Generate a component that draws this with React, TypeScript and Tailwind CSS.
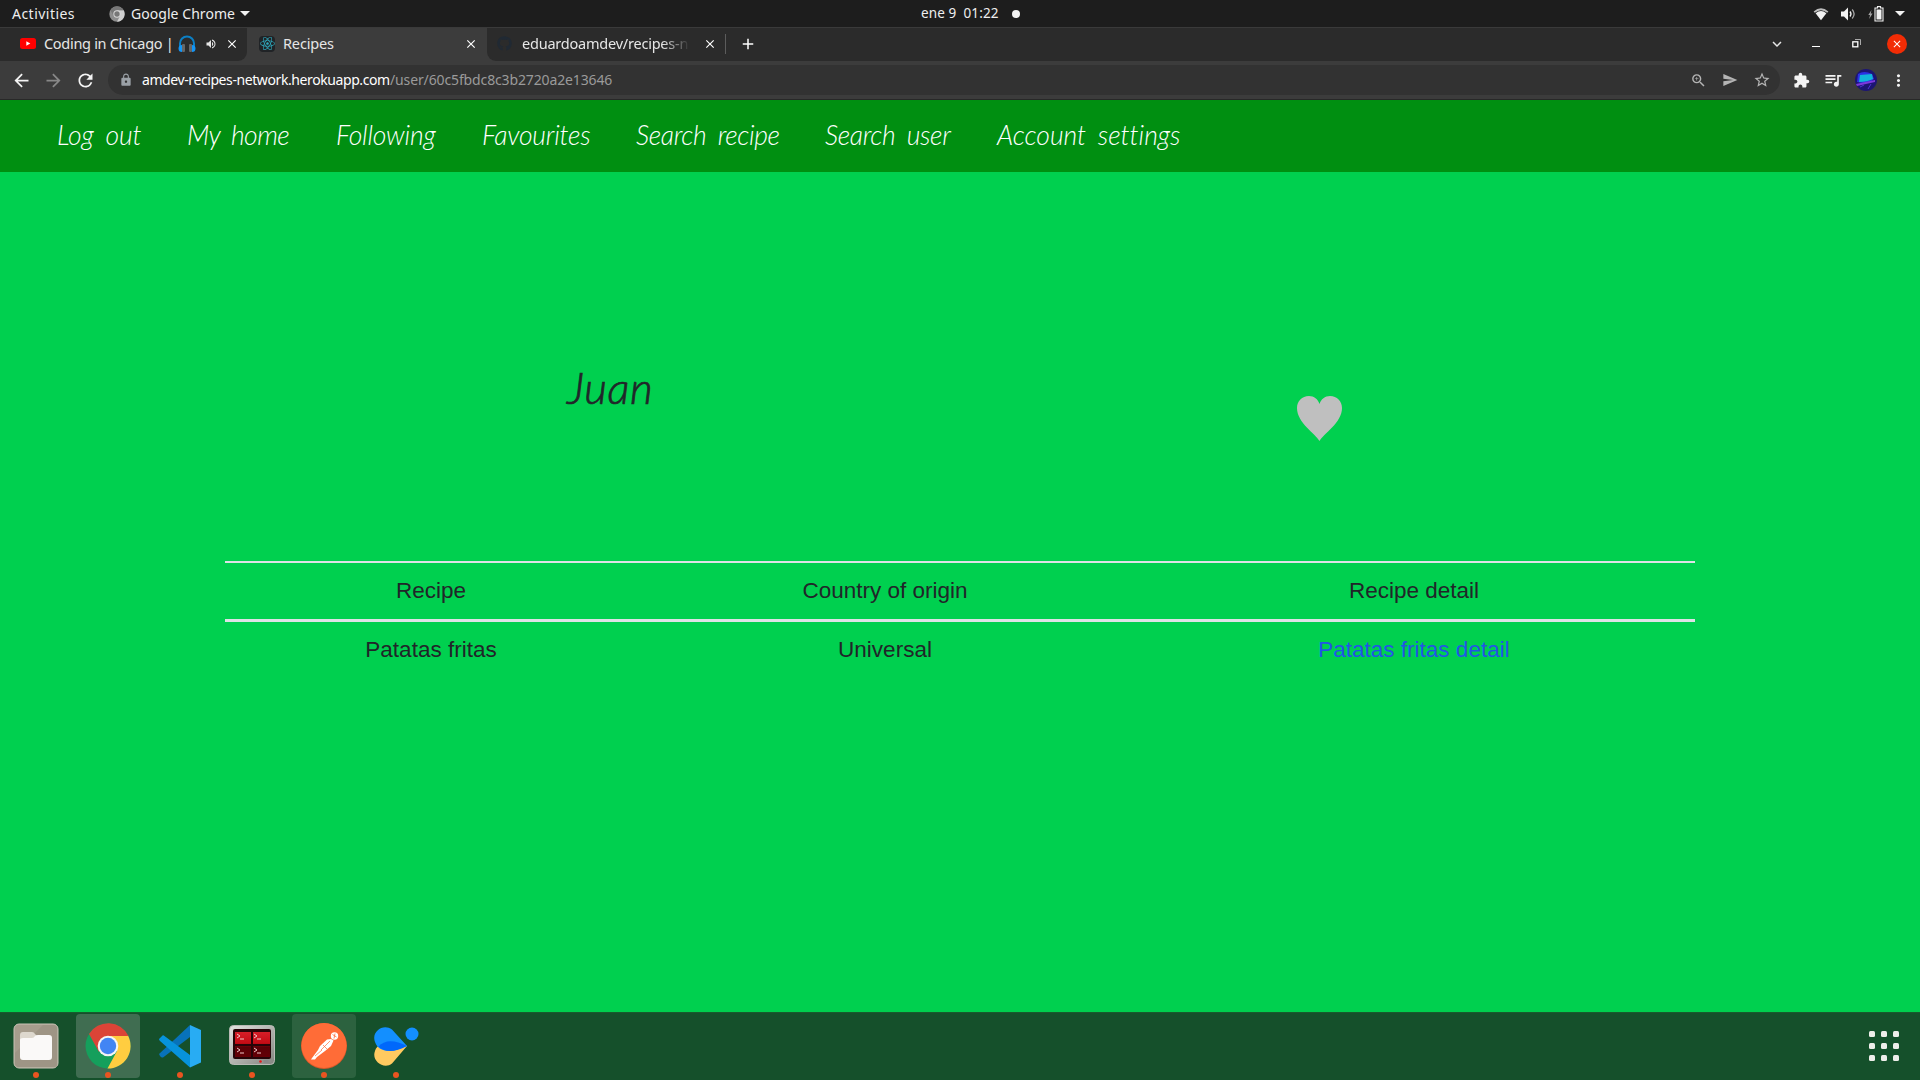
import React from 'react';
import { FaReact, FaGithub } from 'react-icons/fa';
import {
  MdArrowBack, MdArrowForward, MdRefresh, MdLock, MdZoomIn, MdSend, MdStarBorder,
  MdExtension, MdQueueMusic, MdMoreVert, MdVolumeUp, MdClose, MdExpandMore, MdAdd,
} from 'react-icons/md';

const ChromeGrey = () => (
  <svg width="16" height="16" viewBox="0 0 48 48">
    <circle cx="24" cy="24" r="23" fill="#8d8d8d" />
    <path d="M24 13H44A23 23 0 0 1 24 47L33.500 29.500Z" fill="#d0d0d0" />
    <path d="M4 13A23 23 0 0 1 44 13H24L14 29Z" fill="#777" />
    <circle cx="24" cy="24" r="11" fill="#d8d8d8" />
    <circle cx="24" cy="24" r="8" fill="#777" />
  </svg>
);

const Caret = () => (
  <svg width="10" height="5" viewBox="0 0 10 5"><path d="M0 0H10L5 5Z" fill="#f2f2f2" /></svg>
);

const Headphones = () => (
  <svg width="18" height="18" viewBox="0 0 18 18">
    <path d="M2 12V8.500A7 7 0 0 1 16 8.500V12" fill="none" stroke="#0c7fc4" strokeWidth="2" />
    <rect x="4" y="9" width="3" height="8" rx="1" fill="#666" />
    <rect x="11" y="9" width="3" height="8" rx="1" fill="#666" />
    <path d="M4 10Q0.500 10 0.500 13.500T4 17ZM14 10Q17.500 10 17.500 13.500T14 17Z" fill="#1495f5" />
  </svg>
);

function TopBar() {
  return (
    <header className="flex h-[27px] w-full items-center bg-[#1d1d1d] text-[14px] text-[#eeeeee]">
      <span className="ml-[12px] w-[97px] tracking-[0.47px]">Activities</span>
      <ChromeGrey />
      <span className="ml-[6px] w-[109px] tracking-[0.05px]">Google Chrome</span>
      <Caret />
      <span className="ml-[671px] w-[86px] whitespace-pre text-[13.500px] tracking-[0.1px]">ene 9  01:22</span>
      <span className="mt-px ml-[5px] size-2 rounded-full bg-[#f2f2f2]" />
      <div className="ml-auto flex items-center pr-[15px]">
        <svg width="16" height="14" viewBox="0 0 16 14">
          <path d="M0.600 4.500Q8 -2.200 15.400 4.500L14.200 5.800Q8 0.600 1.800 5.800Z" fill="#bdbdbd" />
          <path d="M2.600 6.200Q8 1.800 13.400 6.200L8 13.200Z" fill="#f2f2f2" />
        </svg>
        <svg className="ml-[12px]" width="16" height="14" viewBox="0 0 16 14">
          <path d="M0 4.500H3L7 0.500V13.500L3 9.500H0Z" fill="#f2f2f2" />
          <path d="M9 4.500Q11 7 9 9.500" fill="none" stroke="#f2f2f2" strokeWidth="1.300" />
          <path d="M11.200 2.500Q15 7 11.200 11.500" fill="none" stroke="#a5a5a5" strokeWidth="1.300" />
        </svg>
        <svg className="ml-[11px]" width="16" height="16" viewBox="0 0 16 16">
          <path d="M3.500 4L0.300 9H2L1.200 13L4.500 7.500H2.700Z" fill="#a5a5a5" />
          <path d="M7 2H9.500V0.600H12.500V2H15V15H7Z" fill="none" stroke="#f2f2f2" strokeWidth="1.100" />
          <rect x="8.500" y="3.500" width="5" height="10" fill="#f2f2f2" />
        </svg>
        <span className="ml-[11px]"><Caret /></span>
      </div>
    </header>
  );
}

function TabStrip() {
  return (
    <div className="flex h-[34px] w-full border-t border-[#3a3a3a] bg-[#3c3c3c] text-[14.500px] text-[#e6e6e6]">
      <div className="flex w-[247px] items-center rounded-br-[9px] bg-[#2b2b2b] pb-[2px] pl-5">
        <svg width="16" height="11" viewBox="0 0 16 11">
          <rect width="16" height="11" rx="2.500" fill="#f00" />
          <path d="M6.300 3.200V7.800L10.300 5.500Z" fill="#fff" />
        </svg>
        <span className="ml-2 w-[133px] whitespace-nowrap tracking-[-0.3px]">Coding in Chicago |</span>
        <span className="ml-px"><Headphones /></span>
        <MdVolumeUp size={12} className="ml-[9px]" />
        <MdClose size={14} className="ml-[8px] text-white" />
      </div>
      <div className="flex w-[240px] items-center pb-[2px] pl-[12px]">
        <span className="flex size-4 items-center justify-center rounded-sm bg-[#202326] text-[#2fa9bd]"><FaReact size={15} /></span>
        <span className="ml-2 w-[181px] tracking-[-0.15px]">Recipes</span>
        <MdClose size={14} className="text-white" />
      </div>
      <div className="flex flex-1 items-center rounded-bl-[9px] bg-[#2b2b2b] pb-[2px] pl-[10px]">
        <FaGithub size={15} className="shrink-0 text-[#202933]" />
        <span className="ml-[10px] w-[166px] shrink-0 whitespace-nowrap tracking-[-0.22px] [mask-image:linear-gradient(to_right,#000_140px,transparent_168px)]">eduardoamdev/recipes-ne</span>
        <MdClose size={14} className="ml-[15px] shrink-0 text-white" />
        <span className="ml-[8px] h-5 w-px bg-[#5c5c5c]" />
        <MdAdd size={18} className="ml-[13px] text-white" />
        <div className="ml-auto flex items-center pr-[13px]">
          <MdExpandMore size={18} />
          <span className="mt-[5px] ml-[26px] h-px w-2 bg-white" />
          <svg className="ml-[32px]" width="9" height="9" viewBox="0 0 9 9">
            <path d="M3 0.500H8.500V6" fill="none" stroke="#aaa" />
            <rect x="0.800" y="2.800" width="5" height="5" fill="none" stroke="#fff" strokeWidth="1.300" />
          </svg>
          <span className="ml-[26px] flex size-5 items-center justify-center rounded-full bg-[#f22c05] text-white"><MdClose size={12} /></span>
        </div>
      </div>
    </div>
  );
}

function Toolbar() {
  return (
    <div className="flex h-[39px] w-full items-center border-b border-[#282828] bg-[#3c3c3c] text-[#f4f4f4]">
      <MdArrowBack size={21} className="ml-[11px]" />
      <MdArrowForward size={21} className="ml-[11px] text-[#888]" />
      <MdRefresh size={21} className="ml-[11px]" />
      <div className="ml-[12px] flex h-[30px] w-[1672px] items-center rounded-full bg-[#323232] text-[14px]">
        <MdLock size={14} className="ml-[11px] text-[#9aa0a6]" />
        <span className="ml-[9px] w-[248px] pb-[2px] tracking-[-0.41px] whitespace-nowrap text-white">amdev-recipes-network.herokuapp.com</span>
        <span className="pb-[2px] tracking-[-0.13px] text-[#9a9a9a]">/user/60c5fbdc8c3b2720a2e13646</span>
        <div className="ml-auto flex items-center gap-[15px] pr-[9px] text-[#b4b4b4]">
          <MdZoomIn size={17} />
          <MdSend size={16} />
          <MdStarBorder size={18} />
        </div>
      </div>
      <MdExtension size={17} className="ml-[13px]" />
      <MdQueueMusic size={20} className="ml-[13px]" />
      <svg className="ml-[12px]" width="22" height="22" viewBox="0 0 22 22">
        <circle cx="11" cy="11" r="11" fill="#1c1573" />
        <path d="M3 5Q9 1 17 5L19 10Q13 16 2 13Z" fill="#2b31e3" />
        <path d="M5 6L17 5L18 10Q12 13 4 13Z" fill="#12b5d9" />
        <path d="M1 15L20 11L20 13L2 17Z" fill="#7d38dc" />
        <path d="M5 18L9 16M13 20L16 15" stroke="#4f32cf" />
      </svg>
      <MdMoreVert size={19} className="ml-[12px]" />
    </div>
  );
}

function NavBar() {
  return (
    <nav className="flex h-[72px] w-full bg-[#008f11] pl-[57px] font-[Lato] text-[26.500px] leading-[70px] font-light whitespace-nowrap text-white italic [word-spacing:5px]">
      <a className="w-[130px] tracking-[-0.05px]">Log out</a>
      <a className="w-[149px] tracking-[-0.5px]">My home</a>
      <a className="w-[146px] tracking-[-0.17px]">Following</a>
      <a className="w-[154px] tracking-[-0.25px]">Favourites</a>
      <a className="w-[189px] tracking-[-0.35px]">Search recipe</a>
      <a className="w-[172px] tracking-[-0.35px]">Search user</a>
      <a className="tracking-[-0.02px]">Account settings</a>
    </nav>
  );
}

function Page() {
  return (
    <main className="h-[840px] w-full bg-[#00d04f] px-[225px] font-['Liberation_Sans',sans-serif] text-[#212529]">
      <div className="flex h-[389px]">
        <h1 className="w-[1072px] pt-[187px] pl-[342px] font-[Lato] text-[44px] leading-[56px] font-light tracking-[0.6px] italic [-webkit-text-stroke:0.7px_#212529]">Juan</h1>
        <svg className="mt-[224px]" width="45" height="45" viewBox="0 0 45 45">
          <path d="M22.500 45C19 38 0 27 0 12C0 5 5 0 12 0C17 0 21 3 22.500 8C24 3 28 0 33 0C40 0 45 5 45 12C45 27 26 38 22.500 45Z" fill="#bfbfbf" />
        </svg>
      </div>
      <table className="w-full table-fixed border-collapse text-center text-[22.500px] leading-[30px]">
        <colgroup><col className="w-[412px]" /><col className="w-[496px]" /><col className="w-[562px]" /></colgroup>
        <thead>
          <tr className="h-[58px] border-t-2 border-b-3 border-[#dee2e6]">
            <td>Recipe</td><td>Country of origin</td><td>Recipe detail</td>
          </tr>
        </thead>
        <tbody>
          <tr className="h-[58px]">
            <td>Patatas fritas</td><td>Universal</td><td className="text-[#2354e6]">Patatas fritas detail</td>
          </tr>
        </tbody>
      </table>
    </main>
  );
}

const Files = () => (
  <svg width="46" height="46" viewBox="0 0 46 46">
    <rect x="1" y="1" width="44" height="44" rx="5" fill="#a69d8d" stroke="#c9c2b5" />
    <path d="M2 30L30 2H40Q44 2 44 6V44H6Q2 44 2 40Z" fill="#968d7d" opacity=".5" />
    <path d="M7 12Q7 9 10 9H19Q21 9 22 11L24 13V20H7Z" fill="#ddd8ce" />
    <path d="M7 17Q7 15 10 15H19Q21 15 22 13Q23 12 25 12H36Q39 12 39 15V34Q39 37 36 37H10Q7 37 7 34Z" fill="#faf9f8" />
  </svg>
);

const Chrome = () => (
  <svg width="46" height="46" viewBox="0 0 46 46">
    <circle cx="23" cy="23" r="22.500" fill="#159f5c" />
    <path d="M23 12.500H43A22.500 22.500 0 0 1 22.500 45.500L32 28Z" fill="#ffcd40" />
    <path d="M4 11A22.500 22.500 0 0 1 43.500 13H23L14 29Z" fill="#db4437" />
    <circle cx="23" cy="23" r="10.300" fill="#f5f5f5" />
    <circle cx="23" cy="23" r="8.200" fill="#4285f4" />
  </svg>
);

const Code = () => (
  <svg width="42" height="43" viewBox="0 0 42 43">
    <path d="M0 29L31 0V12L4 32.500Q2.500 33 1 31Z" fill="#0872b9" />
    <path d="M0 14L3.500 10.500Q4.500 10 5.500 11L31 30V42.500L1 16Q0 15 0 14Z" fill="#0793dc" />
    <path d="M31 0L42 5V37.500L31 42.500Z" fill="#28acf3" />
  </svg>
);

const Terminator = () => (
  <svg width="46" height="40" viewBox="0 0 46 40">
    <defs>
      <linearGradient id="frame" x1="0" y1="0" x2="1" y2="1"><stop stopColor="#e4e4e1" /><stop offset="1" stopColor="#82847f" /></linearGradient>
      <linearGradient id="screen" x1="0" y1="0" x2="0" y2="1"><stop stopColor="#d51e28" /><stop offset=".45" stopColor="#c50c15" /><stop offset=".6" stopColor="#590006" /><stop offset="1" stopColor="#650006" /></linearGradient>
    </defs>
    <rect x=".5" y=".5" width="45" height="39" rx="4" fill="url(#frame)" stroke="#b8bab5" />
    <rect x="4" y="4" width="38" height="30" rx="2" fill="#260508" />
    <rect x="6" y="7" width="35" height="25" fill="url(#screen)" />
    <path d="M23 5V33M6 20H41" stroke="#260508" strokeWidth="2" />
    <path d="M8 9L11 11L8 13M11 14H15M25 9L28 11L25 13M28 14H32M8 23L11 25L8 27M11 28H15M25 23L28 25L25 27M28 28H32" fill="none" stroke="#efc8c9" strokeWidth="1" />
    <circle cx="31.500" cy="36.500" r="1.300" fill="#e21919" /><rect x="34.500" y="35" width="5" height="3" fill="#888" />
  </svg>
);

const Postman = () => (
  <svg width="46" height="46" viewBox="0 0 46 46">
    <circle cx="23" cy="23" r="23" fill="#d95829" />
    <circle cx="23" cy="22.500" r="22.500" fill="#ff6c37" />
    <circle cx="33.500" cy="13" r="3.700" fill="#fff" />
    <path d="M31.500 11.500L35.500 14M34 10.500L33 15.500" stroke="#ff6c37" strokeWidth=".8" />
    <path d="M30 16L26 16.500L19 23L17 27L11 35L10 36.500H14L16 34L24 28L30 23L32.500 17.500Z" fill="#fff" />
    <path d="M29 18L20 27M22 22L26 26M14 33L21 27" stroke="#ff6c37" strokeWidth=".7" />
  </svg>
);

const Drops = () => (
  <svg width="45" height="39" viewBox="0 0 45 39">
    <path d="M33 19L18 36.500C10 43 -3 34 1 24C3 17 12 14 18 15Z" fill="#ffca60" />
    <path d="M33 19L18 2.500C9 -4 -3 5 1 15C4 24 14 25 22 23Z" fill="#138fff" />
    <path d="M4.500 19.500C10 13 20 12 33 19C20 26 10 25 4.500 19.500Z" fill="#0068fb" />
    <circle cx="38" cy="7" r="6.500" fill="#138fff" />
  </svg>
);

function DockItem({ tint = '', pad, children }: { tint?: string; pad: string; children: React.ReactNode }) {
  return (
    <div className={`relative flex h-16 w-16 shrink-0 justify-center rounded ${pad} ${tint}`}>
      {children}
      <span className="absolute bottom-0 left-[29px] size-[6px] rounded-full bg-[#e95420]" />
    </div>
  );
}

function Dock() {
  return (
    <footer className="flex h-[68px] w-full gap-2 border-t border-[#185b2d] bg-[#15502b] pt-px pl-1">
      <DockItem pad="pt-[9px]"><Files /></DockItem>
      <DockItem pad="pt-[9px]" tint="bg-[#406d51]"><Chrome /></DockItem>
      <DockItem pad="pt-[11px]"><Code /></DockItem>
      <DockItem pad="pt-[11px]"><Terminator /></DockItem>
      <DockItem pad="pt-[9px]" tint="bg-[#2c623f]"><Postman /></DockItem>
      <DockItem pad="pt-[13px]"><Drops /></DockItem>
      <div className="mt-[17px] mr-[21px] ml-auto grid h-[30px] grid-cols-3 gap-[6px]">
        {Array.from({ length: 9 }, (_, i) => <span key={i} className="size-[6px] rounded-[1.500px] bg-[#eeeeea]" />)}
      </div>
    </footer>
  );
}

export default function App() {
  return (
    <div className="flex h-[1080px] w-[1920px] flex-col overflow-hidden font-['Noto_Sans',sans-serif]">
      <TopBar />
      <TabStrip />
      <Toolbar />
      <NavBar />
      <Page />
      <Dock />
    </div>
  );
}
